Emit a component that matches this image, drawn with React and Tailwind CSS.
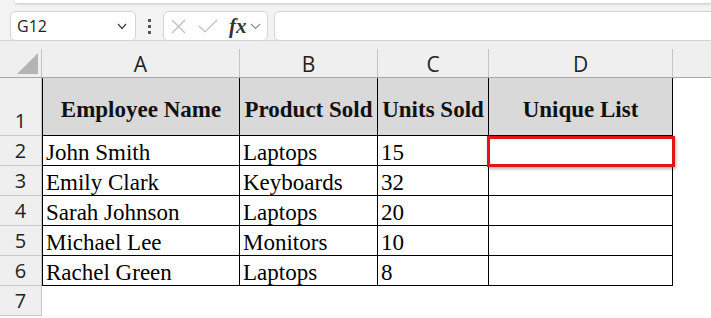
const rows = [
  ["John Smith", "Laptops", "15"],
  ["Emily Clark", "Keyboards", "32"],
  ["Sarah Johnson", "Laptops", "20"],
  ["Michael Lee", "Monitors", "10"],
  ["Rachel Green", "Laptops", "8"],
];

const widths = ["w-[198px]", "w-[138px]", "w-[111px]", "w-[184px]"];
const ui = { fontFamily: '"Open Sans", "Noto Sans", sans-serif' };
const serif = { fontFamily: '"Liberation Serif", "Times New Roman", serif' };

function ColHead({ label, w }) {
  return (
    <div className={`${w} h-full flex items-end shrink-0`}>
      <div className="flex-1 text-center text-[21px] leading-[24px] pb-[1px] text-[#222]">{label}</div>
      <div className="w-px h-[28px] bg-[#c4c4c4]" />
    </div>
  );
}

function RowHead({ n, tall }) {
  return (
    <div className={`w-[42px] shrink-0 bg-[#efefef] border-r border-b border-[#c8c8c8] flex items-end justify-center ${tall ? "h-[58px]" : "h-[30px]"}`}>
      <span className="text-[20px] leading-[24px] pb-[2px] text-[#222]">{n}</span>
    </div>
  );
}

export default function App() {
  return (
    <div className="w-[711px] h-[318px] overflow-hidden bg-white" style={ui}>
      {/* formula bar area */}
      <div className="h-[41px] bg-[#f3f3f3] border-b border-[#d6d6d6]">
        <div className="h-[3px] ml-[15px] bg-white shadow-[0_1px_3px_rgba(0,0,0,0.2)]" />
        <div className="flex h-[30px] mt-[8px] pl-[10px]">
          <div className="w-[126px] h-full bg-white border border-[#d4d4d4] rounded-[5px] flex items-center justify-between pl-[6px] pr-[8px]">
            <span className="text-[16px] text-[#222]">G12</span>
            <svg width="10" height="7" viewBox="0 0 10 7" fill="none" stroke="#444" strokeWidth="1.3">
              <path d="M1 1l4 4.5 4-4.5" />
            </svg>
          </div>
          <div className="w-[27px] flex flex-col items-center justify-center gap-[3px]">
            <span className="w-[3px] h-[3px] bg-[#555]" />
            <span className="w-[3px] h-[3px] bg-[#555]" />
            <span className="w-[3px] h-[3px] bg-[#555]" />
          </div>
          <div className="w-[105px] h-full bg-white border border-[#d4d4d4] rounded-[5px] flex items-center pl-[7px] gap-[12px]">
            <svg width="15" height="15" viewBox="0 0 15 15" stroke="#bdbdbd" strokeWidth="1.2" fill="none">
              <path d="M1 1l13 13M14 1L1 14" />
            </svg>
            <svg width="20" height="14" viewBox="0 0 20 14" stroke="#bdbdbd" strokeWidth="1.2" fill="none">
              <path d="M1 7l6 6L19 1" />
            </svg>
            <div className="flex items-center gap-[3px] -ml-[1px]">
              <span className="italic font-bold text-[21px] leading-none text-[#333]" style={serif}>fx</span>
              <svg width="11" height="7" viewBox="0 0 11 7" fill="none" stroke="#888" strokeWidth="1.1">
                <path d="M1 1l4.5 4.5L10 1" />
              </svg>
            </div>
          </div>
          <div className="flex-1 ml-[6px] -mr-[10px] h-full bg-white border border-[#d4d4d4] rounded-[5px]" />
        </div>
      </div>

      {/* column headers */}
      <div className="h-[37px] bg-[#efefef] border-b border-[#a8a8a8] flex">
        <div className="w-[42px] h-full flex items-end shrink-0">
          <svg width="41" height="36" viewBox="0 0 41 36" className="shrink-0">
            <path d="M17 33L38 12V33Z" fill="#b4b4b4" />
          </svg>
          <div className="w-px h-[28px] bg-[#c4c4c4]" />
        </div>
        {["A", "B", "C", "D"].map((c, i) => (
          <ColHead key={c} label={c} w={widths[i]} />
        ))}
      </div>

      {/* row 1 header */}
      <div className="flex">
        <RowHead n={1} tall />
        {["Employee Name", "Product Sold", "Units Sold", "Unique List"].map((h, i) => (
          <div
            key={h}
            className={`${widths[i]} h-[58px] shrink-0 bg-[#d9d9d9] border-r border-b border-black ${i === 0 ? "border-l" : ""} flex items-center justify-center pt-[7px] text-[23px] leading-[26px] font-bold text-[#111] whitespace-nowrap`}
            style={serif}
          >
            {h}
          </div>
        ))}
      </div>

      {rows.map((r, ri) => (
        <div key={ri} className="flex">
          <RowHead n={ri + 2} />
          {[...r, ""].map((v, i) => (
            <div
              key={i}
              className={`${widths[i]} h-[30px] shrink-0 border-r border-b border-black ${i === 0 ? "border-l" : ""} flex items-end pl-[3px] text-[23px] leading-[24px] text-black whitespace-nowrap ${ri === 0 && i === 3 ? "relative" : ""}`}
              style={serif}
            >
              {v}
              {ri === 0 && i === 3 && (
                <div className="absolute -left-[2px] -right-[3px] top-0 -bottom-[2px] border-[3px] border-[#e3151b] shadow-[1px_2px_3px_rgba(0,0,0,0.3)]" />
              )}
            </div>
          ))}
        </div>
      ))}

      <div className="flex">
        <RowHead n={7} />
      </div>
    </div>
  );
}
